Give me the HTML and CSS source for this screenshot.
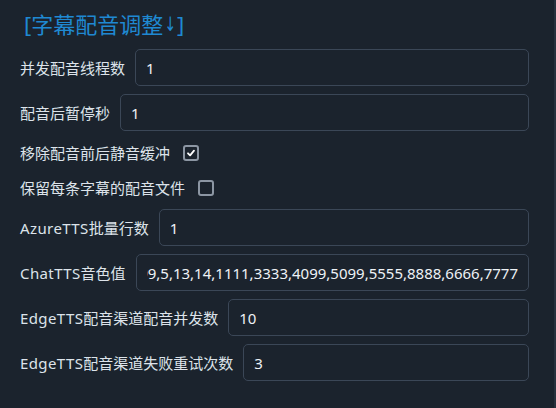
FILE: index.html
```html
<!DOCTYPE html>
<html lang="zh">
<head>
<meta charset="utf-8">
<link rel="stylesheet" href="styles.css">
</head>
<body>
<div class="panel">
  <div class="title">[字幕配音调整<span class="arrow">↓</span>]</div>
  <div class="form">
    <div class="row"><span class="label">并发配音线程数</span><input class="field" value="1"></div>
    <div class="row"><span class="label">配音后暂停秒</span><input class="field" value="1"></div>
    <div class="row check-row"><span class="label">移除配音前后静音缓冲</span><span class="box checked"><svg viewBox="0 0 16 16" width="16" height="16"><path d="M4 8.4 L6.8 11.2 L12 4.8" fill="none" stroke="#ffffff" stroke-width="2.4" stroke-linecap="round" stroke-linejoin="round"/></svg></span></div>
    <div class="row check-row"><span class="label">保留每条字幕的配音文件</span><span class="box"></span></div>
    <div class="row"><span class="label"><span class="en">AzureTTS</span>批量行数</span><input class="field" value="1"></div>
    <div class="row"><span class="label"><span class="en">ChatTTS</span>音色值</span><input class="field end" dir="rtl" value="11,12,16,2222,4444,6653,7869,9999,5,13,14,1111,3333,4099,5099,5555,8888,6666,7777"></div>
    <div class="row"><span class="label"><span class="en">EdgeTTS</span>配音渠道配音并发数</span><input class="field" value="10"></div>
    <div class="row"><span class="label"><span class="en">EdgeTTS</span>配音渠道失败重试次数</span><input class="field" value="3"></div>
  </div>
</div>
</body>
</html>
```

FILE: styles.css
```css
html, body {
  margin: 0;
  padding: 0;
  background: #1b232d;
}
body {
  width: 556px;
  height: 408px;
  overflow: hidden;
  font-family: "Noto Sans", "Noto Sans CJK SC", sans-serif;
  color: #dde3ea;
}
.panel {
  box-sizing: border-box;
  height: 408px;
  padding: 7px 25px 0 20px;
  border-right: 2px solid #27313d;
}
.title {
  font-size: 22px;
  line-height: 34px;
  height: 34px;
  color: #1f89d2;
  padding-left: 4px;
  margin-bottom: 8px;
  white-space: nowrap;
}
.arrow {
  display: inline-block;
  margin: 0 -2px 0 -1px;
  font-family: "DejaVu Sans", sans-serif;
  font-size: 20px;
  line-height: 34px;
  vertical-align: top;
  transform: scaleX(0.7);
}
.form {
  display: flex;
  flex-direction: column;
  gap: 8px;
}
.row {
  display: flex;
  align-items: center;
  gap: 10px;
  height: 37px;
}
.check-row {
  height: 27px;
  gap: 13px;
}
.label {
  font-size: 15px;
  white-space: nowrap;
  flex: none;
}
.en {
  letter-spacing: 0.4px;
}
.field {
  flex: 1;
  min-width: 0;
  box-sizing: border-box;
  height: 37px;
  margin: 0;
  padding: 0 10px;
  border: 1px solid #3b4757;
  border-radius: 5px;
  background: #1b232d;
  color: #eef2f6;
  font-family: "Noto Sans", sans-serif;
  font-size: 15px;
  outline: none;
}
.field.end {
  text-align: right;
}
.box {
  box-sizing: border-box;
  width: 16px;
  height: 16px;
  border: 2px solid #8c96a3;
  border-radius: 3px;
  display: flex;
  align-items: center;
  justify-content: center;
}
.box svg {
  display: block;
  width: 12px;
  height: 12px;
}
```
